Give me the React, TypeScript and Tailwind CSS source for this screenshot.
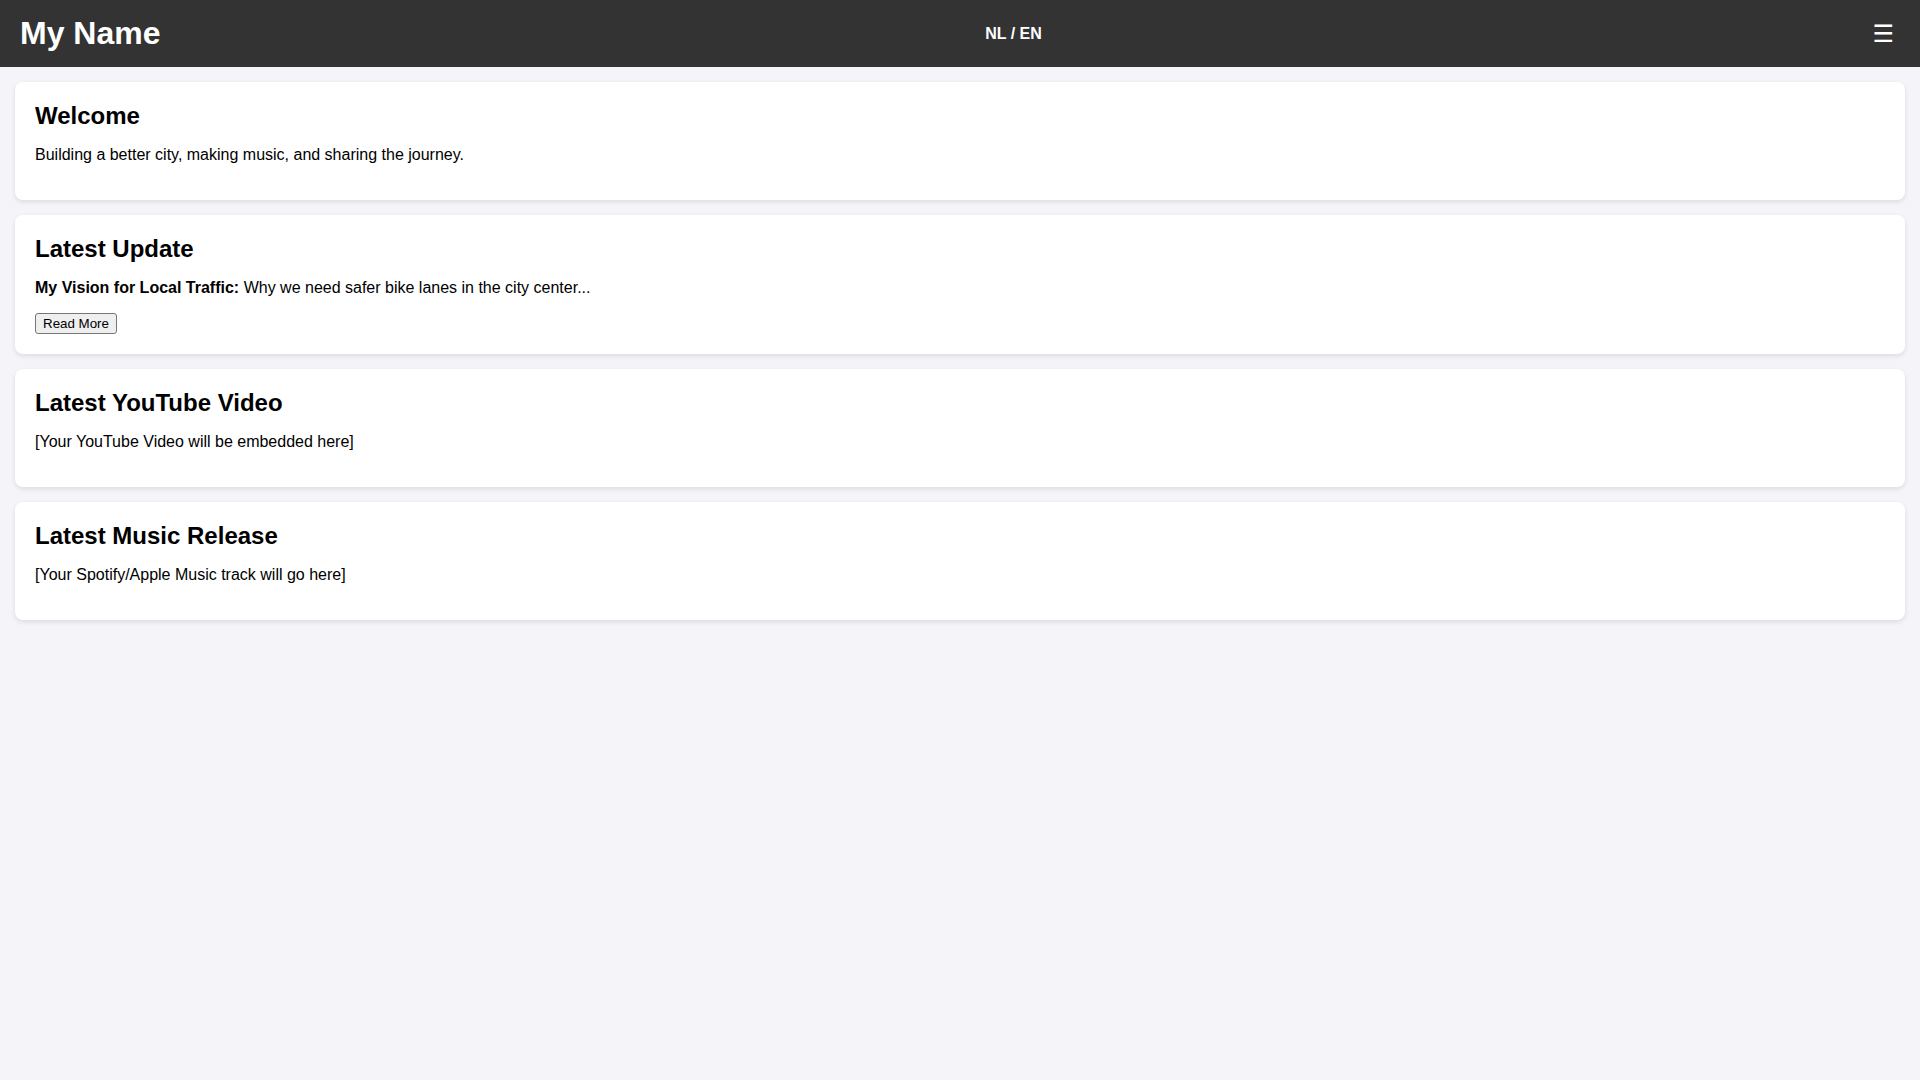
import React from "react";

const cards = [
  {
    title: "Welcome",
    body: "Building a better city, making music, and sharing the journey.",
  },
  {
    title: "Latest Update",
    lead: "My Vision for Local Traffic:",
    body: " Why we need safer bike lanes in the city center...",
    button: "Read More",
  },
  {
    title: "Latest YouTube Video",
    body: "[Your YouTube Video will be embedded here]",
  },
  {
    title: "Latest Music Release",
    body: "[Your Spotify/Apple Music track will go here]",
  },
];

export default function App() {
  return (
    <div className="min-h-screen bg-[#f4f4f9] text-black font-['Liberation_Sans',Arial,sans-serif] leading-[normal]">
      <header className="flex items-center justify-between bg-[#333] text-white px-5 py-[15px]">
        <h1 className="m-0 text-[32px] font-bold leading-[normal]">My Name</h1>
        <div className="text-[16px] font-bold leading-[normal]">NL / EN</div>
        <button className="bg-transparent border-0 text-white text-[24px] px-[6px] py-[1px] leading-[normal] font-['DejaVu_Sans',sans-serif]">
          ☰
        </button>
      </header>

      <main className="p-[15px]">
        {cards.map((card) => (
          <section
            key={card.title}
            className="bg-white rounded-lg p-5 mb-[15px] shadow-[0_2px_5px_rgba(0,0,0,0.1)]"
          >
            <h2 className="m-0 text-[24px] font-bold leading-[normal]">{card.title}</h2>
            <p className="my-4 text-[16px] leading-[normal]">
              {card.lead && <strong className="font-bold">{card.lead}</strong>}
              {card.body}
            </p>
            {card.button && (
              <button className="block bg-[#efefef] text-black border border-[#767676] rounded-[3px] px-[7px] py-[2px] text-[13.333px] leading-[normal]">
                {card.button}
              </button>
            )}
          </section>
        ))}
      </main>
    </div>
  );
}
